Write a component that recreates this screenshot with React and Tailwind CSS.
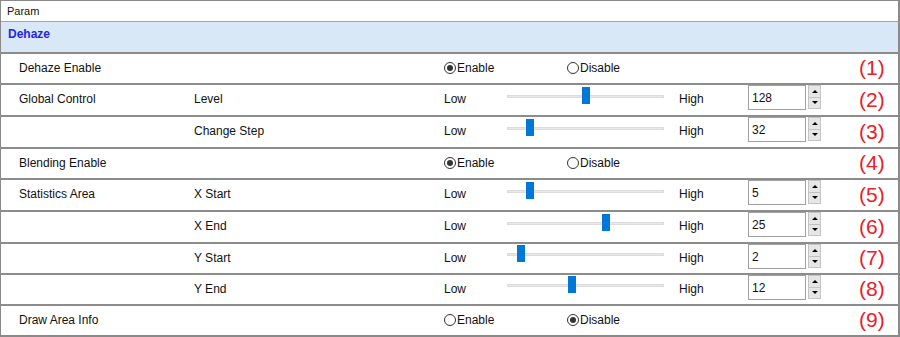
import React from "react";

const font = { fontFamily: '"Liberation Sans", Arial, sans-serif' };

const rows = [
  { label: "Dehaze Enable", type: "radio", value: "enable", tag: "(1)", h: "h-[31px]" },
  { label: "Global Control", sub: "Level", type: "slider", left: 75, value: 128, tag: "(2)", h: "h-[32px]" },
  { sub: "Change Step", type: "slider", left: 19, value: 32, tag: "(3)", h: "h-[32px]" },
  { label: "Blending Enable", type: "radio", value: "enable", tag: "(4)", h: "h-[31px]" },
  { label: "Statistics Area", sub: "X Start", type: "slider", left: 19, value: 5, tag: "(5)", h: "h-[32px]" },
  { sub: "X End", type: "slider", left: 95, value: 25, tag: "(6)", h: "h-[32px]" },
  { sub: "Y Start", type: "slider", left: 10, value: 2, tag: "(7)", h: "h-[31px]" },
  { sub: "Y End", type: "slider", left: 61, value: 12, tag: "(8)", h: "h-[31px]" },
  { label: "Draw Area Info", type: "radio", value: "disable", tag: "(9)", h: "h-[31px]" },
];

const Radio = ({ checked, text }) => (
  <div className="flex items-center gap-[1px]">
    <span className="w-[12px] h-[12px] rounded-full border border-[#333] flex items-center justify-center">
      {checked && <span className="w-[6px] h-[6px] rounded-full bg-[#333]" />}
    </span>
    <span>{text}</span>
  </div>
);

const Slider = ({ left }) => (
  <div className="relative w-[157px] h-[30px] -mt-[5px]">
    <div className="absolute left-0 right-0 top-[13px] h-[3px] bg-[#e8e8e8] border border-[#dcdcdc]" />
    <div
      className="absolute top-[5px] w-[8px] h-[17px] bg-[#0078d7]"
      style={{ left }}
    />
  </div>
);

const SpinBox = ({ value }) => (
  <div className="flex self-start gap-[2px]">
    <div className="w-[58px] h-[25px] border border-[#a0a0a0] bg-white pl-[3px] pt-[5px] text-[12px] leading-[14px] text-[#111]">
      {value}
    </div>
    <div className="flex flex-col w-[13px] h-[24px]">
      <div className="flex-1 bg-[#e6e6e6] border border-[#c4c4c4] flex items-center justify-center">
        <span className="w-0 h-0 border-l-[3px] border-r-[3px] border-b-[3px] border-l-transparent border-r-transparent border-b-black" />
      </div>
      <div className="flex-1 bg-[#e6e6e6] border border-t-0 border-[#c4c4c4] flex items-center justify-center">
        <span className="w-0 h-0 border-l-[3px] border-r-[3px] border-t-[3px] border-l-transparent border-r-transparent border-t-black" />
      </div>
    </div>
  </div>
);

const Row = ({ row }) => (
  <div className={`flex items-center ${row.h} border-t-2 border-[#8c8c8c] pl-[18px] pb-[2px] text-[12px] text-[#111]`}>
    <div className="w-[175px]">{row.label}</div>
    <div className="w-[250px]">{row.sub}</div>
    {row.type === "radio" ? (
      <div className="w-[414px] flex">
        <div className="w-[123px]">
          <Radio checked={row.value === "enable"} text="Enable" />
        </div>
        <Radio checked={row.value === "disable"} text="Disable" />
      </div>
    ) : (
      <div className="w-[414px] flex items-center h-full">
        <div className="w-[63px]">Low</div>
        <Slider left={row.left} />
        <div className="w-[15px]" />
        <div className="w-[69px]">High</div>
        <SpinBox value={row.value} />
      </div>
    )}
    <div className="ml-[1px] text-[21px] leading-none text-[#e8202a]">{row.tag}</div>
  </div>
);

export default function App() {
  return (
    <div
      className="w-[900px] h-[337px] overflow-hidden bg-white border-t border-l border-r-2 border-b-2 border-[#8a8a8a]"
      style={font}
    >
      <div className="h-[20px] pl-[6px] text-[11px] leading-[20px] text-[#111]">Param</div>
      <div className="h-[31px] border-t border-[#a6a6a6] bg-[#d9e8f6] pl-[7px] pt-[3px] text-[12px] font-bold text-[#2424e8]">
        Dehaze
      </div>
      {rows.map((r, i) => (
        <Row key={i} row={r} />
      ))}
    </div>
  );
}
